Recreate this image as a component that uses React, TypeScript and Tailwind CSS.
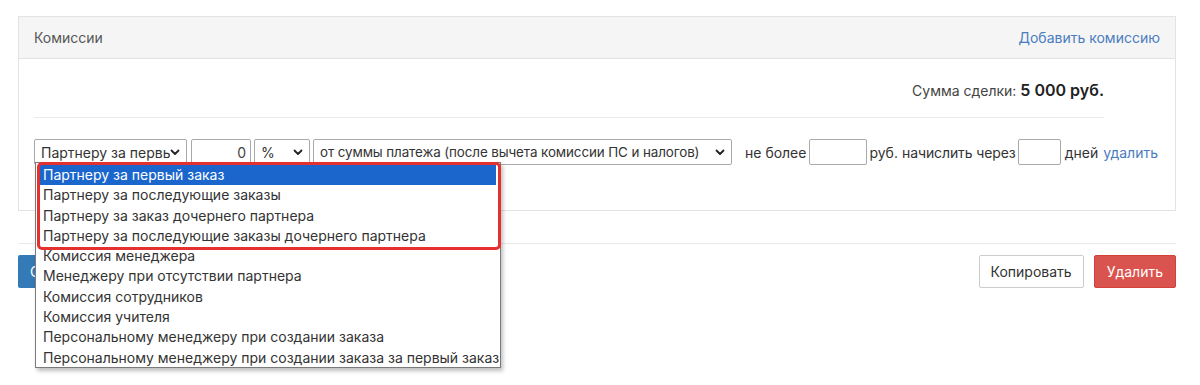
const Chevron = () => (
    <svg width="10" height="7" viewBox="0 0 10 7" className="shrink-0">
        <polyline points="1.5,1.5 5,5 8.5,1.5" fill="none" stroke="#222" strokeWidth="1.8" strokeLinecap="round" strokeLinejoin="round" />
    </svg>
)

const FakeSelect = ({ label, width, tight }: { label: string; width: string; tight?: boolean }) => (
    <div className={`${width} shrink-0 h-[26px] border border-[#a9a9a9] rounded-[2px] bg-white flex items-center justify-between pl-[6px] pr-[6px] overflow-hidden`}>
        <span className={tight ? 'whitespace-nowrap overflow-hidden text-[13.4px] tracking-[-0.1px]' : 'whitespace-nowrap overflow-hidden'}>{label}</span>
        <Chevron />
    </div>
)

const options = [
    'Партнеру за первый заказ',
    'Партнеру за последующие заказы',
    'Партнеру за заказ дочернего партнера',
    'Партнеру за последующие заказы дочернего партнера',
    'Комиссия менеджера',
    'Менеджеру при отсутствии партнера',
    'Комиссия сотрудников',
    'Комиссия учителя',
    'Персональному менеджеру при создании заказа',
    'Персональному менеджеру при создании заказа за первый заказ',
]

export default function App() {
    return (
        <div className="relative w-[1200px] h-[385px] bg-white overflow-hidden font-['Inter',sans-serif] text-[14px] text-[#333]">
            <div className="pt-[16px] pl-[18px] pr-[24px]">
                <div className="border border-[#e3e3e3]">
                    <div className="h-[42px] bg-[#f5f5f5] border-b border-[#e3e3e3] flex items-center justify-between pl-[15px] pr-[15px]">
                        <span className="text-[#555]">Комиссии</span>
                        <a className="text-[#4a7cc0]">Добавить комиссию</a>
                    </div>
                    <div className="px-[15px] pt-[19px] pb-[45px]">
                        <div className="mr-[56px] border-b border-[#eaeaea] pb-[15px] flex justify-end items-baseline">
                            <span className="text-[#444]">Сумма сделки:&nbsp;</span>
                            <span className="text-[16px] font-semibold text-[#222]">5 000 руб.</span>
                        </div>
                        <div className="mt-[21px] flex items-center whitespace-nowrap">
                            <FakeSelect label="Партнеру за первый заказ" width="w-[153px]" />
                            <div className="shrink-0 ml-[4px] w-[60px] h-[26px] border border-[#a9a9a9] rounded-[2px] flex items-center justify-end pr-[4px] text-[#444]">0</div>
                            <div className="shrink-0 ml-[3px]"><FakeSelect label="%" width="w-[56px]" /></div>
                            <div className="shrink-0 ml-[3px]"><FakeSelect label="от суммы платежа (после вычета комиссии ПС и налогов)" width="w-[419px]" tight /></div>
                            <span className="shrink-0 ml-[13px]">не более</span>
                            <div className="shrink-0 ml-[3px] w-[58px] h-[26px] border border-[#a9a9a9] rounded-[2px]"></div>
                            <span className="shrink-0 ml-[2px]">руб.</span>
                            <span className="shrink-0 ml-[4px] tracking-[-0.1px]">начислить через</span>
                            <div className="shrink-0 ml-[2px] w-[43px] h-[26px] border border-[#a9a9a9] rounded-[2px]"></div>
                            <span className="shrink-0 ml-[4px]">дней</span>
                            <a className="shrink-0 ml-[5px] text-[#4a7cc0]">удалить</a>
                        </div>
                    </div>
                </div>
                <div className="mt-[32px] border-t border-[#eaeaea] pt-[11px] flex justify-between">
                    <button className="h-[33px] px-[12px] bg-[#337ab7] text-white rounded-[2px]">Сохранить</button>
                    <div className="flex gap-[10px]">
                        <button className="h-[33px] px-[11px] bg-white border border-[#ccc] text-[#333] rounded-[2px]">Копировать</button>
                        <button className="h-[33px] px-[12px] bg-[#d9534f] border border-[#d43f3a] text-white rounded-[2px]">Удалить</button>
                    </div>
                </div>
            </div>

            <div className="absolute left-[35px] top-[162px] w-[466px] h-[206px] bg-white border border-[#7a7a7a] shadow-[2px_3px_4px_rgba(0,0,0,0.25)] pt-[2px]">
                {options.map((o, i) => (
                    <div
                        key={o}
                        className={i === 0
                            ? 'h-[20.3px] leading-[20px] pl-[3px] mx-[4px] bg-[#1a66cc] text-white whitespace-nowrap'
                            : 'h-[20.3px] leading-[20px] pl-[3px] mx-[4px] text-[#333] whitespace-nowrap'}
                    >
                        {o}
                    </div>
                ))}
                <div className="absolute left-[1px] top-[-1px] w-[464px] h-[88px] border-[3px] border-[#e53030] rounded-[5px]"></div>
            </div>
        </div>
    )
}
